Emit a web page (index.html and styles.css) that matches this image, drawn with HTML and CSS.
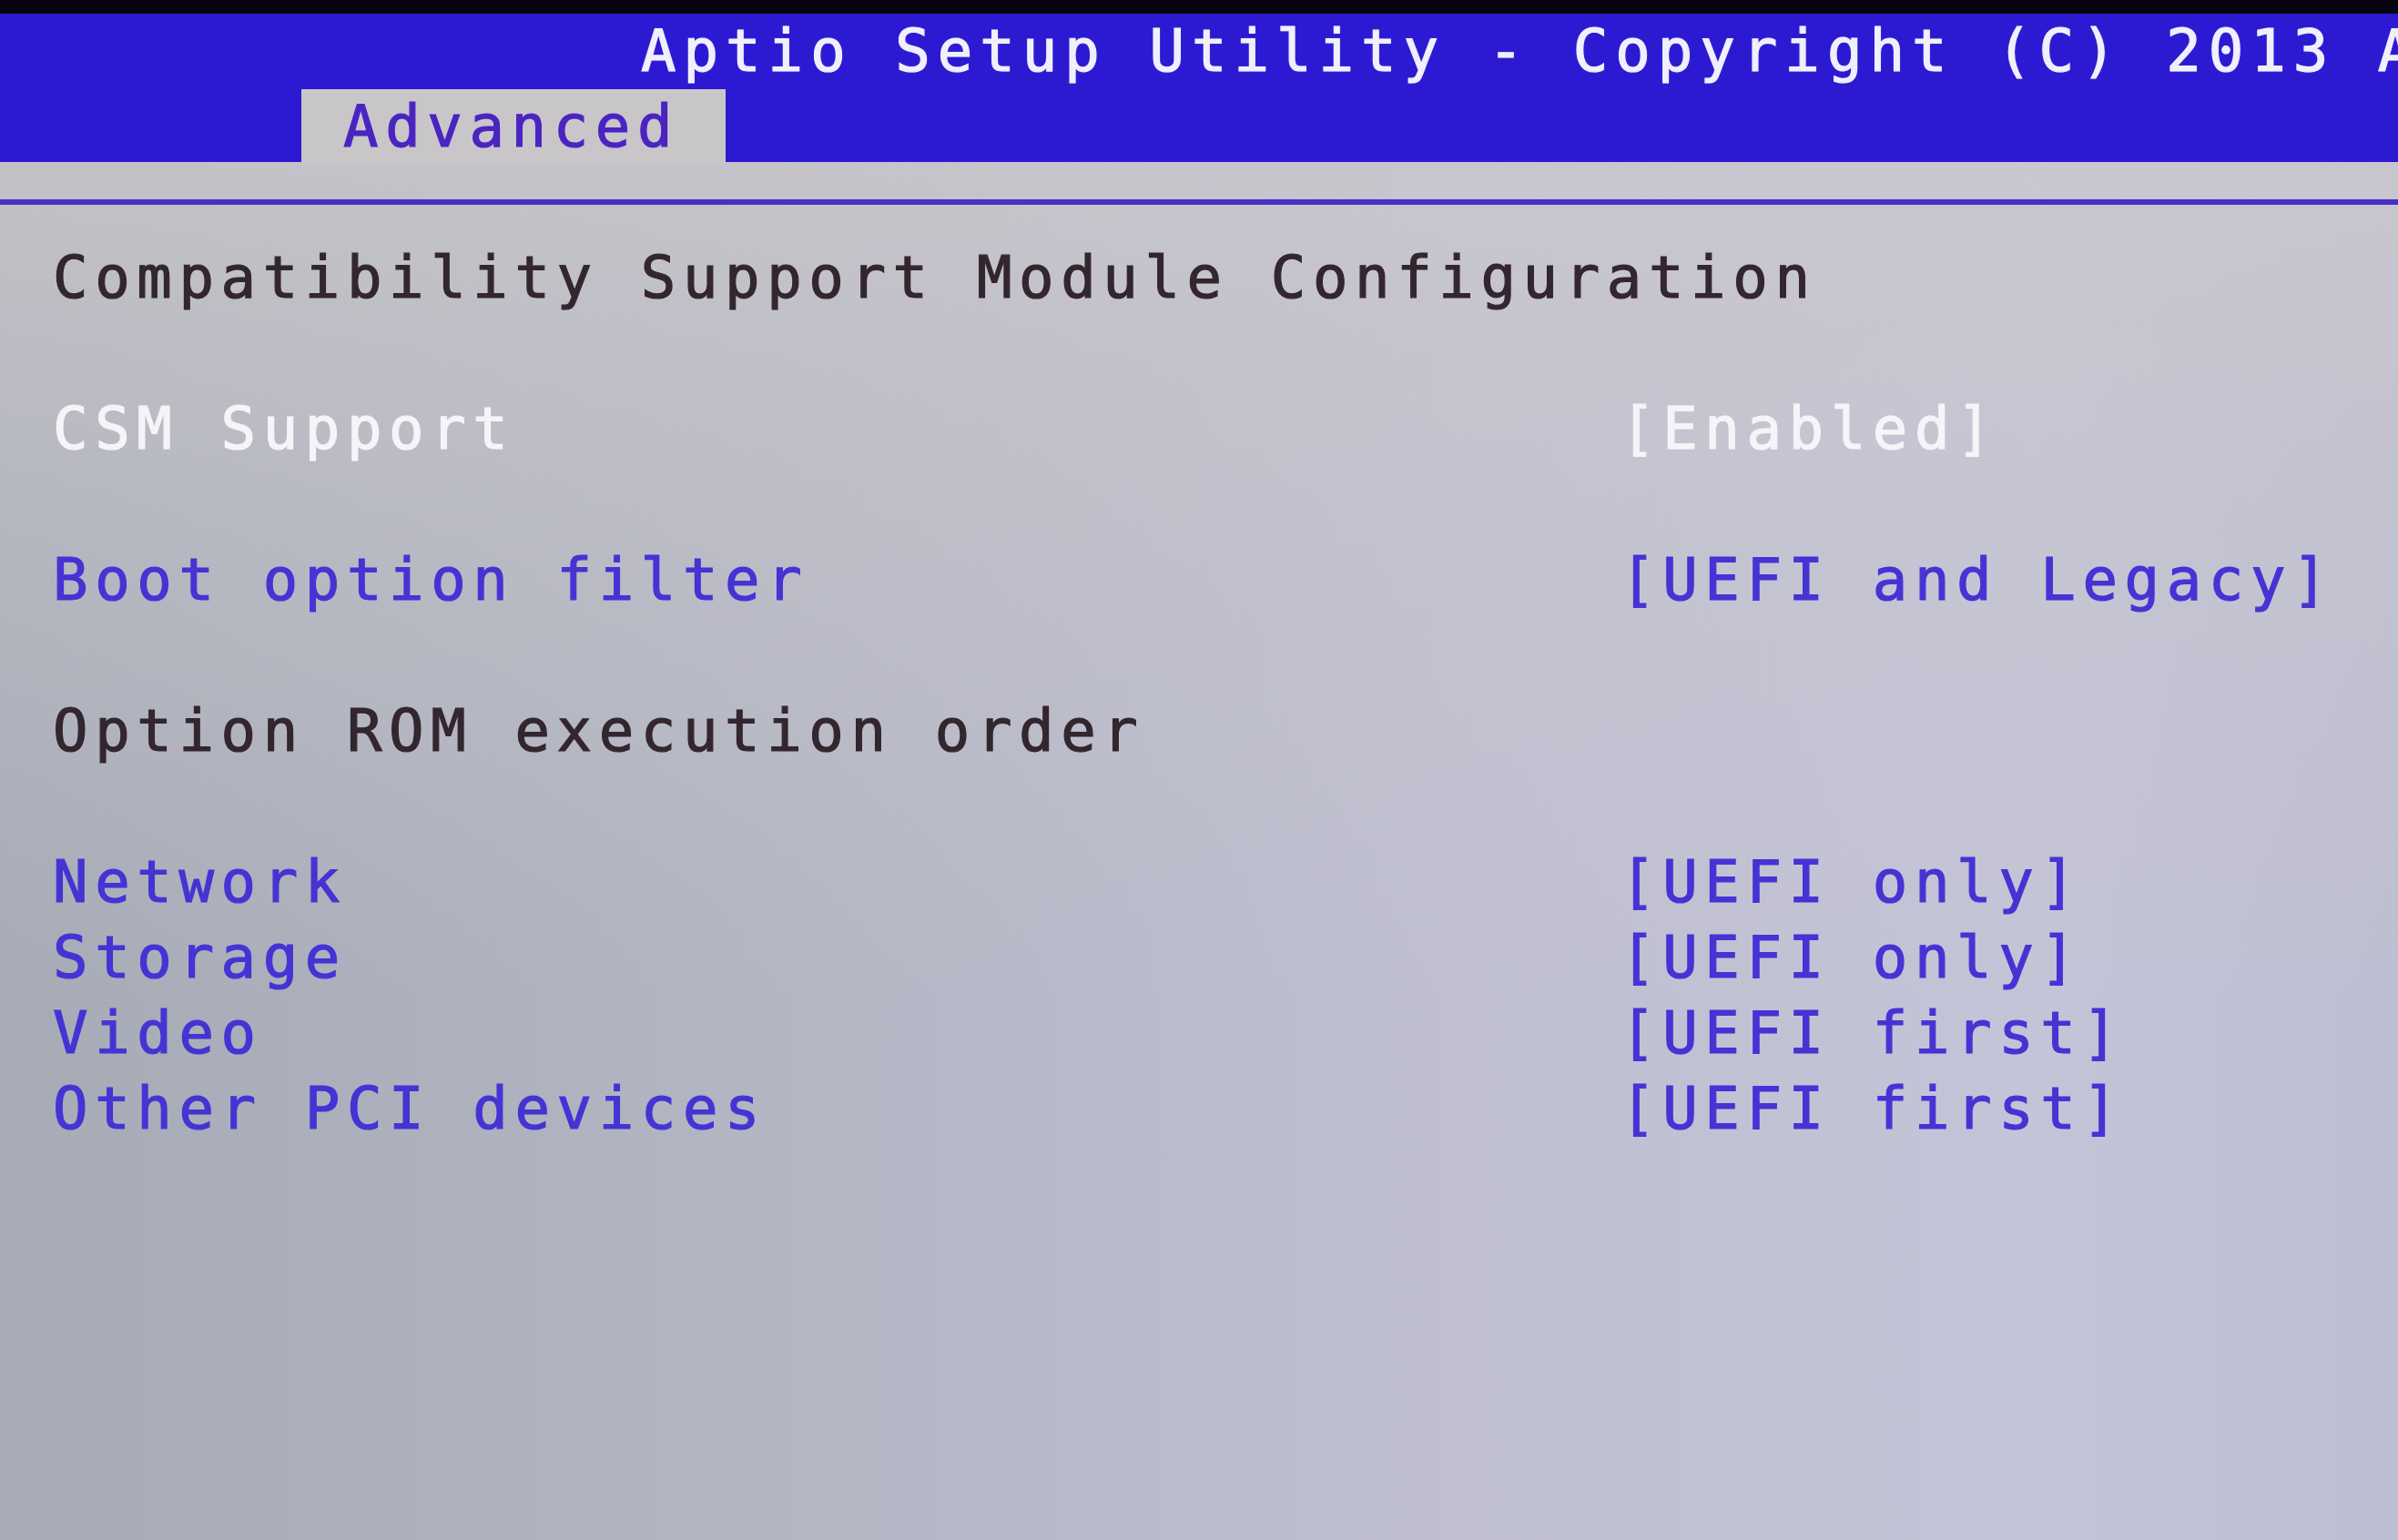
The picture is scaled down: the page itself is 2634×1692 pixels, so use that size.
FILE: index.html
```html
<!DOCTYPE html>
<html lang="en">
<head>
  <meta charset="UTF-8" />
  <meta name="viewport" content="width=device-width, initial-scale=1.0"/>
  <title>Aptio Setup Utility - Advanced</title>
  <link rel="stylesheet" href="styles.css">
</head>
<body>

  <!-- Screen edge -->
  <div class="bezel"></div>

  <!-- Title bar + tabs -->
  <div class="title-bar">
    <div class="title">Aptio Setup Utility - Copyright (C) 2013 American Megatrends, Inc.</div>
    <div class="tabs">
      <div class="tab active">Advanced</div>
    </div>
  </div>
  <div class="rule"></div>

  <!-- CSM page -->
  <div class="page">
    <div class="heading spaced">Compatibility Support Module Configuration</div>

    <div class="row selected spaced">
      <span class="label">CSM Support</span>
      <span class="value">[Enabled]</span>
    </div>

    <div class="row option spaced">
      <span class="label">Boot option filter</span>
      <span class="value">[UEFI and Legacy]</span>
    </div>

    <div class="heading spaced">Option ROM execution order</div>

    <div class="row option">
      <span class="label">Network</span>
      <span class="value">[UEFI only]</span>
    </div>
    <div class="row option">
      <span class="label">Storage</span>
      <span class="value">[UEFI only]</span>
    </div>
    <div class="row option">
      <span class="label">Video</span>
      <span class="value">[UEFI first]</span>
    </div>
    <div class="row option">
      <span class="label">Other PCI devices</span>
      <span class="value">[UEFI first]</span>
    </div>
  </div>

</body>
</html>
```

FILE: styles.css
```css
body {
  margin: 0;
  width: 2634px;
  height: 1692px;
  overflow: hidden;
  font-family: "DejaVu Sans Mono", monospace;
  font-size: 64px;
  line-height: 83px;
  letter-spacing: 7.6px;
  -webkit-text-stroke: 1.2px currentColor;
  background:
    linear-gradient(to bottom, rgba(204, 201, 204, 0.9) 0%, rgba(200, 198, 204, 0.5) 30%, rgba(190, 190, 200, 0) 65%),
    linear-gradient(to right, #a6abb6 0%, #b2b5c2 30%, #bfbfd1 60%, #c4c4d8 85%, #bebed2 100%);
}

.bezel {
  height: 15px;
  background: #07050f;
}

.title-bar {
  background: #2b1ad2;
  height: 163px;
}

.title {
  padding-left: 704px;
  color: #f1effb;
  white-space: nowrap;
  overflow: hidden;
  letter-spacing: 8px;
  text-shadow: 0 0 2px rgba(255, 255, 255, 0.4);
}

.tabs {
  display: flex;
  padding-left: 331px;
}

.tab {
  width: 466px;
  height: 83px;
  box-sizing: border-box;
  padding-left: 46px;
  background: #c9c6c9;
  color: #4a24c2;
}

.rule {
  height: 6px;
  margin: 41px 0 39px;
  background: #4a2ec6;
}

.page {
  padding-left: 58px;
}

.heading {
  color: #33262f;
  white-space: nowrap;
}

.row {
  display: grid;
  grid-template-columns: 1722px auto;
  white-space: nowrap;
}

.spaced {
  margin-bottom: 83px;
}

.selected {
  color: #f6f4f8;
  text-shadow: 0 0 2px rgba(255, 255, 255, 0.35);
}

.option {
  color: #4633d4;
}
```
